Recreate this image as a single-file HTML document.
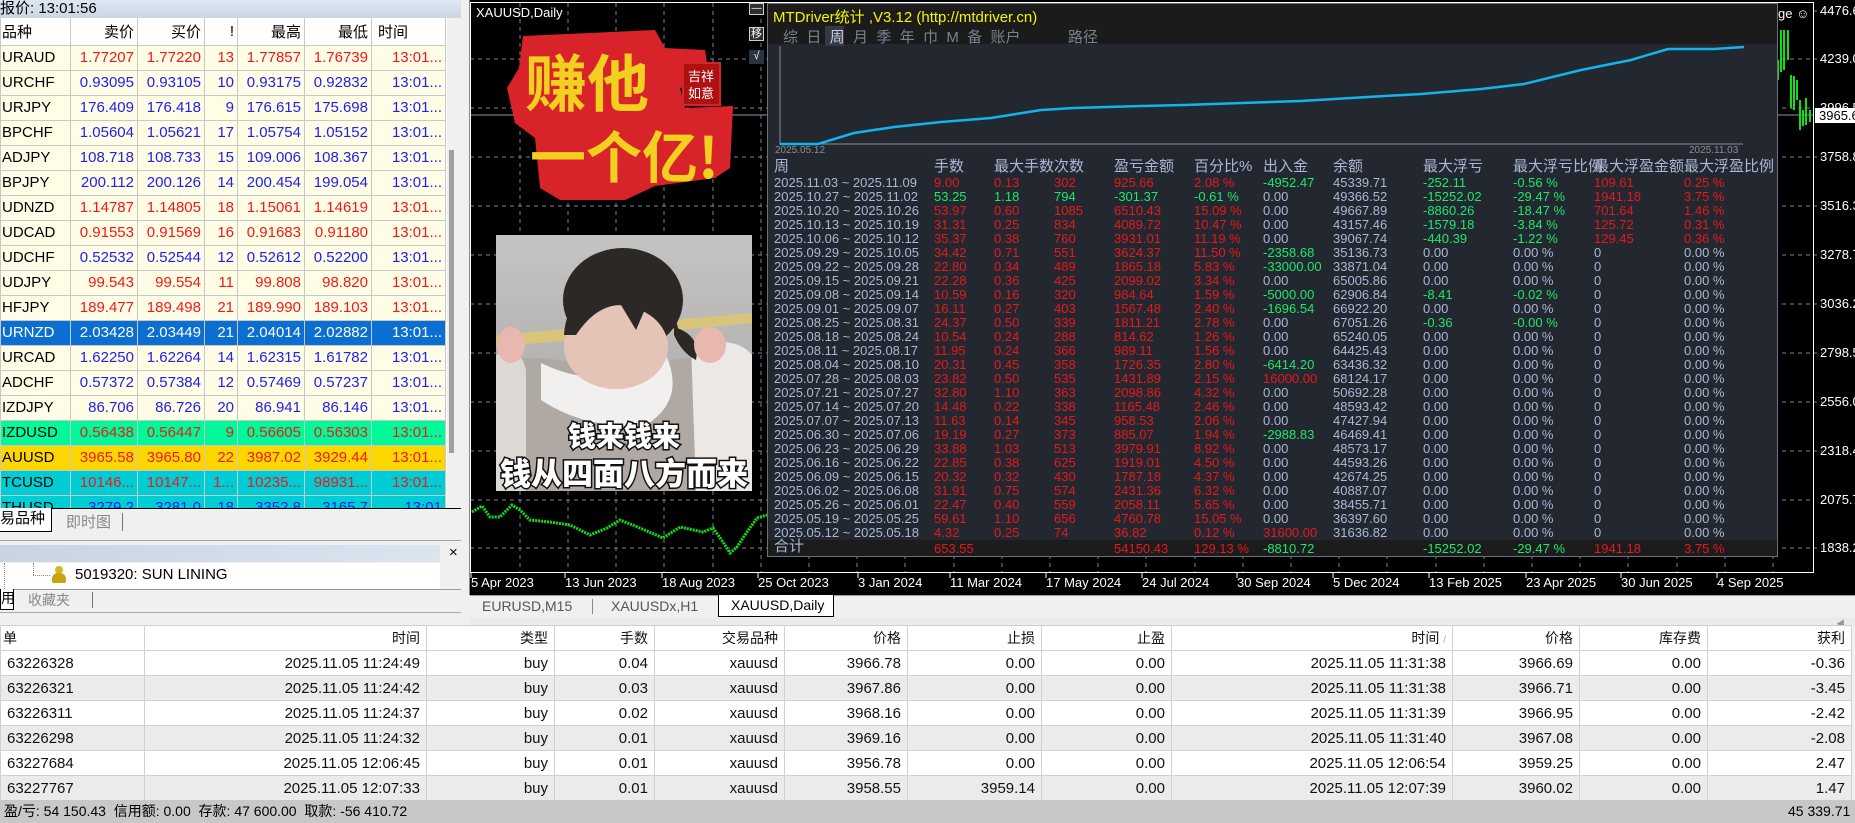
<!DOCTYPE html>
<html><head><meta charset="utf-8">
<style>
*{margin:0;padding:0;box-sizing:border-box}
body{width:1855px;height:823px;overflow:hidden;position:relative;background:#f0f0f0;font-family:"Liberation Sans","Noto Sans CJK SC",sans-serif}
.a{position:absolute}
#lp table{border-collapse:collapse;table-layout:fixed;font-size:15px}
#lp td{height:25px;border:1px solid #c8c8c8;text-align:right;padding-right:3px;white-space:nowrap;overflow:hidden;background:#fffde6}
#lp td:first-child{text-align:left;padding-left:1px;color:#000}
#lp tr.h td{height:27px;background:#fff;color:#000;border-top:none}
.B td{color:#2020f0}.R td{color:#f01818}
tr.sel td{background:#0a6fd0!important;color:#fff!important}
tr.mi td{background:#00fa9a!important}tr.go td{background:#ffd700!important}tr.te td{background:#00ccd4!important}
#sp{left:767px;top:3px;width:1011px;height:554px;background:#232830;border:1px solid #6a7080;color:#a9b8d6;overflow:hidden}
.row{position:absolute;left:0;height:14px;line-height:14px;font-size:13px;white-space:nowrap;width:1010px}
.row span{position:absolute}
.r{color:#e8181c}.g{color:#1de86a}
.c0{left:6px}.c1{left:166px}.c2{left:226px}.c3{left:286px}.c4{left:346px}.c5{left:426px}.c6{left:495px}.c7{left:565px}.c8{left:655px}.c9{left:745px}.c10{left:826px}.c11{left:916px}
#bt{border-collapse:collapse;table-layout:fixed;font-size:15px;position:absolute;left:0;top:625px;width:1851px}
#bt td{height:25px;border:1px solid #d0d0d0;text-align:right;padding-right:6px;white-space:nowrap;color:#111}
#bt tr.h td{background:#fff;font-size:14px}
#bt tr:nth-child(odd):not(.h) td{background:#ebebeb}
#bt tr:nth-child(even) td{background:#fff}
.pl{position:absolute;left:1820px;color:#fff;font-size:13px;line-height:14px}
.dl{position:absolute;top:575px;color:#fff;font-size:13px}
</style></head><body>

<!-- LEFT PANEL -->
<div class="a" style="left:0;top:0;width:461px;height:18px;background:linear-gradient(#dfe7f1,#c9d6e4);font-size:15px;line-height:18px;padding-left:0">报价: 13:01:56</div>
<div id="lp" class="a" style="left:0;top:18px;width:447px;height:490px;overflow:hidden;background:#fff">
<table style="width:445px">
<colgroup><col style="width:70px"><col style="width:67px"><col style="width:67px"><col style="width:33px"><col style="width:67px"><col style="width:67px"><col style="width:74px"></colgroup>
<tr class="h"><td>品种</td><td>卖价</td><td>买价</td><td>!</td><td>最高</td><td>最低</td><td style="text-align:left;padding-left:6px">时间</td></tr>
<tr class="R"><td>URAUD</td><td>1.77207</td><td>1.77220</td><td>13</td><td>1.77857</td><td>1.76739</td><td>13:01...</td></tr>
<tr class="B"><td>URCHF</td><td>0.93095</td><td>0.93105</td><td>10</td><td>0.93175</td><td>0.92832</td><td>13:01...</td></tr>
<tr class="B"><td>URJPY</td><td>176.409</td><td>176.418</td><td>9</td><td>176.615</td><td>175.698</td><td>13:01...</td></tr>
<tr class="B"><td>BPCHF</td><td>1.05604</td><td>1.05621</td><td>17</td><td>1.05754</td><td>1.05152</td><td>13:01...</td></tr>
<tr class="B"><td>ADJPY</td><td>108.718</td><td>108.733</td><td>15</td><td>109.006</td><td>108.367</td><td>13:01...</td></tr>
<tr class="B"><td>BPJPY</td><td>200.112</td><td>200.126</td><td>14</td><td>200.454</td><td>199.054</td><td>13:01...</td></tr>
<tr class="R"><td>UDNZD</td><td>1.14787</td><td>1.14805</td><td>18</td><td>1.15061</td><td>1.14619</td><td>13:01...</td></tr>
<tr class="R"><td>UDCAD</td><td>0.91553</td><td>0.91569</td><td>16</td><td>0.91683</td><td>0.91180</td><td>13:01...</td></tr>
<tr class="B"><td>UDCHF</td><td>0.52532</td><td>0.52544</td><td>12</td><td>0.52612</td><td>0.52200</td><td>13:01...</td></tr>
<tr class="R"><td>UDJPY</td><td>99.543</td><td>99.554</td><td>11</td><td>99.808</td><td>98.820</td><td>13:01...</td></tr>
<tr class="R"><td>HFJPY</td><td>189.477</td><td>189.498</td><td>21</td><td>189.990</td><td>189.103</td><td>13:01...</td></tr>
<tr class="sel"><td>URNZD</td><td>2.03428</td><td>2.03449</td><td>21</td><td>2.04014</td><td>2.02882</td><td>13:01...</td></tr>
<tr class="B"><td>URCAD</td><td>1.62250</td><td>1.62264</td><td>14</td><td>1.62315</td><td>1.61782</td><td>13:01...</td></tr>
<tr class="B"><td>ADCHF</td><td>0.57372</td><td>0.57384</td><td>12</td><td>0.57469</td><td>0.57237</td><td>13:01...</td></tr>
<tr class="B"><td>IZDJPY</td><td>86.706</td><td>86.726</td><td>20</td><td>86.941</td><td>86.146</td><td>13:01...</td></tr>
<tr class="R mi"><td>IZDUSD</td><td>0.56438</td><td>0.56447</td><td>9</td><td>0.56605</td><td>0.56303</td><td>13:01...</td></tr>
<tr class="R go"><td>AUUSD</td><td>3965.58</td><td>3965.80</td><td>22</td><td>3987.02</td><td>3929.44</td><td>13:01...</td></tr>
<tr class="R te"><td>TCUSD</td><td>10146...</td><td>10147...</td><td>1...</td><td>10235...</td><td>98931...</td><td>13:01...</td></tr>
<tr class="B te"><td>THUSD</td><td>3279.2</td><td>3281.0</td><td>18</td><td>3352.8</td><td>3165.7</td><td>13:01</td></tr>
</table></div>
<div class="a" style="left:447px;top:18px;width:14px;height:490px;background:#f0f0f0"></div>
<div class="a" style="left:449px;top:150px;width:5px;height:303px;background:#a0a0a0"></div>
<div class="a" style="left:0;top:508px;width:461px;height:1px;background:#000"></div>
<div class="a" style="left:0;top:508px;width:52px;height:24px;background:#fff;border:1px solid #000;border-left:none;border-top:none;font-size:15px;line-height:22px">易品种</div>
<div class="a" style="left:66px;top:511px;font-size:15px;color:#888">即时图</div>
<div class="a" style="left:122px;top:513px;width:1px;height:18px;background:#777"></div>
<div class="a" style="left:0;top:540px;width:461px;height:1px;background:#a0a0a0"></div>
<div class="a" style="left:0;top:545px;width:440px;height:17px;background:linear-gradient(90deg,#c8d4e2,#dbe5f0)"></div>
<div class="a" style="left:449px;top:544px;font-size:15px">×</div>
<div class="a" style="left:0;top:563px;width:440px;height:26px;background:#fff"></div>
<div class="a" style="left:4px;top:563px;width:1px;height:26px;border-left:1px dotted #888"></div>
<div class="a" style="left:33px;top:563px;width:1px;height:12px;border-left:1px dotted #888"></div>
<div class="a" style="left:33px;top:575px;width:17px;height:1px;border-top:1px dotted #888"></div>
<div class="a" style="left:52px;top:566px;width:13px;height:17px"><div class="a" style="left:3px;top:0;width:8px;height:8px;border-radius:50%;background:#d8b818"></div><div class="a" style="left:0;top:7px;width:14px;height:10px;border-radius:6px 6px 2px 2px;background:#c9a412"></div></div>
<div class="a" style="left:75px;top:566px;font-size:15px">5019320: SUN LINING</div>
<div class="a" style="left:0;top:589px;width:461px;height:1px;background:#999"></div>
<div class="a" style="left:0;top:589px;width:14px;height:21px;background:#fff;border:1px solid #000;border-top:none;font-size:14px;line-height:18px">用</div>
<div class="a" style="left:28px;top:590px;font-size:14px;color:#888">收藏夹</div>
<div class="a" style="left:92px;top:592px;width:1px;height:16px;background:#777"></div>
<div class="a" style="left:0;top:612px;width:461px;height:1px;background:#aaa"></div>
<div class="a" style="left:461px;top:0;width:9px;height:595px;background:#f0f0f0;border-right:1px solid #888"></div>

<!-- CHART -->
<div class="a" style="left:470px;top:0;width:1385px;height:595px;background:#000"></div>
<svg class="a" style="left:0;top:0" width="1855" height="595">
<g stroke="#7a7f88" stroke-width="1" stroke-dasharray="4 4">
<path d="M470 59H1813M470 108H1813M470 157H1813M470 206H1813M470 255H1813M470 304H1813M470 353H1813M470 402H1813M470 451H1813M470 500H1813M470 548H1813"/>
<path d="M520 3V572M568 3V572M616 3V572M664 3V572M713 3V572M761 3V572M809 3V572M857 3V572M905 3V572M954 3V572M1002 3V572M1050 3V572M1098 3V572M1146 3V572M1195 3V572M1243 3V572M1291 3V572M1339 3V572M1387 3V572M1436 3V572M1484 3V572M1532 3V572M1580 3V572M1628 3V572M1677 3V572M1725 3V572M1773 3V572"/>
<path d="M1813 11H1822M1813 59H1822M1813 157H1822M1813 206H1822M1813 255H1822M1813 304H1822M1813 353H1822M1813 402H1822M1813 451H1822M1813 548H1822"/>
</g>
<path d="M470 115H1813" stroke="#8a96a8" stroke-width="1"/>
<rect x="470.5" y="2.5" width="1343" height="570" fill="none" stroke="#fff"/>
<g stroke="#fff"><path d="M471 572v6M565 572v6M662 572v6M758 572v6M858 572v6M950 572v6M1046 572v6M1142 572v6M1237 572v6M1333 572v6M1429 572v6M1526 572v6M1621 572v6M1717 572v6"/></g>
<polyline fill="none" stroke="#10e010" stroke-width="3" stroke-dasharray="2 1" points="472,512 482,506 490,517 500,517 512,505 520,510 530,520 550,522 570,525 590,535 607,528 620,520 640,528 663,538 680,527 703,532 713,528 723,542 730,553 737,547 747,532 757,518 767,515"/>
<g stroke="#10e010" stroke-width="2"><path d="M1778 60V80M1781 30V72M1784 30V70M1788 30V60M1791 75V108M1794 76V110M1797 80V100M1800 100V130M1803 110V126M1806 98V125M1810 110V122"/></g>
</svg>
<div class="a" style="left:476px;top:5px;color:#fff;font-size:13px">XAUUSD,Daily</div>
<div class="a" style="left:1778px;top:6px;color:#fff;font-size:13px">ge ☺</div>
<div class="pl" style="top:4px">4476.6</div><div class="pl" style="top:52px">4239.0</div><div class="pl" style="top:101px">3996.5</div>
<div class="a" style="left:1815px;top:108px;width:40px;height:15px;background:#fff;color:#000;font-size:13px;line-height:15px;padding-left:4px">3965.6</div>
<div class="pl" style="top:150px">3758.8</div><div class="pl" style="top:199px">3516.3</div><div class="pl" style="top:248px">3278.7</div><div class="pl" style="top:297px">3036.2</div><div class="pl" style="top:346px">2798.5</div><div class="pl" style="top:395px">2556.0</div><div class="pl" style="top:444px">2318.4</div><div class="pl" style="top:493px">2075.7</div><div class="pl" style="top:541px">1838.2</div>
<div class="dl" style="left:471px">5 Apr 2023</div><div class="dl" style="left:565px">13 Jun 2023</div><div class="dl" style="left:662px">18 Aug 2023</div><div class="dl" style="left:758px">25 Oct 2023</div><div class="dl" style="left:858px">3 Jan 2024</div><div class="dl" style="left:950px">11 Mar 2024</div><div class="dl" style="left:1046px">17 May 2024</div><div class="dl" style="left:1142px">24 Jul 2024</div><div class="dl" style="left:1237px">30 Sep 2024</div><div class="dl" style="left:1333px">5 Dec 2024</div><div class="dl" style="left:1429px">13 Feb 2025</div><div class="dl" style="left:1526px">23 Apr 2025</div><div class="dl" style="left:1621px">30 Jun 2025</div><div class="dl" style="left:1717px">4 Sep 2025</div>

<!-- buttons -->
<div class="a" style="left:749px;top:3px;width:15px;height:12px;background:#303030;border:1px solid #ccc;color:#fff;font-size:10px;line-height:10px;text-align:center">—</div>
<div class="a" style="left:749px;top:27px;width:15px;height:14px;background:#303030;border:1px solid #ccc;color:#fff;font-size:11px;line-height:12px;text-align:center">移</div>
<div class="a" style="left:749px;top:50px;width:15px;height:14px;background:#2a3440;color:#fff;font-size:11px;line-height:13px;text-align:center">√</div>

<!-- sticker -->
<svg class="a" style="left:505px;top:28px" width="232" height="180">
<path d="M18 8 L150 2 L160 20 L200 22 L205 55 L175 60 L180 80 L228 78 L225 140 L210 150 L150 158 L120 172 L55 172 L35 160 L30 110 L10 95 L2 60 L14 40 Z" fill="#d8232a"/>
<rect x="178" y="35" width="37" height="42" fill="#b01010" stroke="#d02828" stroke-width="2"/>
<text x="183" y="53" fill="#fff" font-size="13" font-family="Noto Sans CJK SC">吉祥</text>
<text x="183" y="70" fill="#fff" font-size="13" font-family="Noto Sans CJK SC">如意</text>
<text x="20" y="78" fill="#f2d020" font-size="62" font-weight="bold" font-family="Noto Sans CJK SC,sans-serif">赚他</text>
<text x="25" y="150" fill="#f2d020" font-size="56" font-weight="bold" font-family="Noto Sans CJK SC,sans-serif">一个亿!</text>
</svg>

<!-- photo -->
<svg class="a" style="left:496px;top:235px" width="256" height="256">
<defs><linearGradient id="bg" x1="0" y1="0" x2="0" y2="1"><stop offset="0" stop-color="#c4c4c4"/><stop offset="1" stop-color="#a8a4a0"/></linearGradient></defs>
<rect width="256" height="256" fill="url(#bg)"/>
<path d="M0 100 L256 78 L256 88 L0 112Z" fill="#d8c47a"/>
<path d="M0 125 Q60 118 100 135 L150 130 Q220 115 256 125 V256 H0Z" fill="#b0a8a2"/>
<path d="M45 128 Q110 160 170 120 Q190 165 150 190 Q90 195 45 165Z" fill="#f2f0ee"/>
<path d="M195 110 Q240 100 256 120 V256 H200Z" fill="#ece8e6"/>
<path d="M0 120 Q25 110 30 135 V256 H0Z" fill="#dcd8d4"/>
<ellipse cx="127" cy="65" rx="60" ry="52" fill="#2c2826"/>
<ellipse cx="120" cy="112" rx="52" ry="42" fill="#e4c4b6"/>
<path d="M68 100 Q70 55 125 48 Q178 52 183 100 Q165 75 150 72 L140 95 L125 70 Q100 70 80 100Z" fill="#2c2826"/>
<path d="M178 92 Q205 100 200 125 Q186 118 178 100Z" fill="#2c2826"/>
<ellipse cx="15" cy="110" rx="14" ry="18" fill="#e8b8b0"/>
<ellipse cx="214" cy="110" rx="16" ry="18" fill="#e8b8b0"/>
<g font-family="Noto Sans CJK SC,sans-serif" font-weight="900" text-anchor="middle" fill="#fff" stroke="#111" stroke-width="3" paint-order="stroke">
<text x="128" y="211" font-size="28">钱来钱来</text>
<text x="128" y="250" font-size="31">钱从四面八方而来</text>
</g>
</svg>

<!-- STATS PANEL -->
<div id="sp" class="a">
<div class="a" style="left:0;top:0;width:1011px;height:40px;background:#1b1b1b"></div>
<div class="a" style="left:5px;top:2px;color:#f5f500;font-size:15px">MTDriver统计 ,V3.12 (http://mtdriver.cn)</div>
<div class="a" style="left:57px;top:22px;width:19px;height:20px;background:#333a46"></div>
<div class="a" style="left:15px;top:22px;color:#7a8290;font-size:15px;word-spacing:0;white-space:pre">综  日  <span style="color:#c8d0dc">周</span>  月  季  年  巾  M  备  账户</div>
<div class="a" style="left:300px;top:22px;color:#7a8290;font-size:15px">路径</div>
<svg class="a" style="left:0;top:40px" width="1010" height="120">
<path d="M12 2V100H975" stroke="#8a8e96" fill="none"/>
<polyline fill="none" stroke="#12b4ee" stroke-width="2.5" points="12,100 50,100 86,89 126,83 173,78 223,74 273,66 306,64 373,62 416,61 533,57 600,53 653,50 713,45 756,40 813,26 863,16 900,5 946,5 976,3"/>
</svg>
<div class="a" style="left:7px;top:141px;font-size:10px;color:#8a8e96">2025.05.12</div>
<div class="a" style="left:921px;top:141px;font-size:10px;color:#8a8e96">2025.11.03</div>
<div class="row" style="top:154px;height:18px;line-height:18px;font-size:15px"><span class="c0">周</span><span class="c1">手数</span><span class="c2">最大手数次数</span><span class="c4">盈亏金额</span><span class="c5">百分比%</span><span class="c6">出入金</span><span class="c7">余额</span><span class="c8">最大浮亏</span><span class="c9">最大浮亏比例</span><span class="c10">最大浮盈金额</span><span class="c11">最大浮盈比例</span></div>
<div class="row" style="top:172px"><span class="c0">2025.11.03 ~ 2025.11.09</span><span class="c1 r">9.00</span><span class="c2 r">0.13</span><span class="c3 r">302</span><span class="c4 r">925.66</span><span class="c5 r">2.08 %</span><span class="c6 g">-4952.47</span><span class="c7">45339.71</span><span class="c8 g">-252.11</span><span class="c9 g">-0.56 %</span><span class="c10 r">109.61</span><span class="c11 r">0.25 %</span></div>
<div class="row" style="top:186px"><span class="c0">2025.10.27 ~ 2025.11.02</span><span class="c1 g">53.25</span><span class="c2 g">1.18</span><span class="c3 g">794</span><span class="c4 g">-301.37</span><span class="c5 g">-0.61 %</span><span class="c6">0.00</span><span class="c7">49366.52</span><span class="c8 g">-15252.02</span><span class="c9 g">-29.47 %</span><span class="c10 r">1941.18</span><span class="c11 r">3.75 %</span></div>
<div class="row" style="top:200px"><span class="c0">2025.10.20 ~ 2025.10.26</span><span class="c1 r">53.97</span><span class="c2 r">0.60</span><span class="c3 r">1085</span><span class="c4 r">6510.43</span><span class="c5 r">15.09 %</span><span class="c6">0.00</span><span class="c7">49667.89</span><span class="c8 g">-8860.26</span><span class="c9 g">-18.47 %</span><span class="c10 r">701.64</span><span class="c11 r">1.46 %</span></div>
<div class="row" style="top:214px"><span class="c0">2025.10.13 ~ 2025.10.19</span><span class="c1 r">31.31</span><span class="c2 r">0.25</span><span class="c3 r">834</span><span class="c4 r">4089.72</span><span class="c5 r">10.47 %</span><span class="c6">0.00</span><span class="c7">43157.46</span><span class="c8 g">-1579.18</span><span class="c9 g">-3.84 %</span><span class="c10 r">125.72</span><span class="c11 r">0.31 %</span></div>
<div class="row" style="top:228px"><span class="c0">2025.10.06 ~ 2025.10.12</span><span class="c1 r">35.37</span><span class="c2 r">0.38</span><span class="c3 r">760</span><span class="c4 r">3931.01</span><span class="c5 r">11.19 %</span><span class="c6">0.00</span><span class="c7">39067.74</span><span class="c8 g">-440.39</span><span class="c9 g">-1.22 %</span><span class="c10 r">129.45</span><span class="c11 r">0.36 %</span></div>
<div class="row" style="top:242px"><span class="c0">2025.09.29 ~ 2025.10.05</span><span class="c1 r">34.42</span><span class="c2 r">0.71</span><span class="c3 r">551</span><span class="c4 r">3624.37</span><span class="c5 r">11.50 %</span><span class="c6 g">-2358.68</span><span class="c7">35136.73</span><span class="c8">0.00</span><span class="c9">0.00 %</span><span class="c10">0</span><span class="c11">0.00 %</span></div>
<div class="row" style="top:256px"><span class="c0">2025.09.22 ~ 2025.09.28</span><span class="c1 r">22.80</span><span class="c2 r">0.34</span><span class="c3 r">489</span><span class="c4 r">1865.18</span><span class="c5 r">5.83 %</span><span class="c6 g">-33000.00</span><span class="c7">33871.04</span><span class="c8">0.00</span><span class="c9">0.00 %</span><span class="c10">0</span><span class="c11">0.00 %</span></div>
<div class="row" style="top:270px"><span class="c0">2025.09.15 ~ 2025.09.21</span><span class="c1 r">22.28</span><span class="c2 r">0.36</span><span class="c3 r">425</span><span class="c4 r">2099.02</span><span class="c5 r">3.34 %</span><span class="c6">0.00</span><span class="c7">65005.86</span><span class="c8">0.00</span><span class="c9">0.00 %</span><span class="c10">0</span><span class="c11">0.00 %</span></div>
<div class="row" style="top:284px"><span class="c0">2025.09.08 ~ 2025.09.14</span><span class="c1 r">10.59</span><span class="c2 r">0.16</span><span class="c3 r">320</span><span class="c4 r">984.64</span><span class="c5 r">1.59 %</span><span class="c6 g">-5000.00</span><span class="c7">62906.84</span><span class="c8 g">-8.41</span><span class="c9 g">-0.02 %</span><span class="c10">0</span><span class="c11">0.00 %</span></div>
<div class="row" style="top:298px"><span class="c0">2025.09.01 ~ 2025.09.07</span><span class="c1 r">16.11</span><span class="c2 r">0.27</span><span class="c3 r">403</span><span class="c4 r">1567.48</span><span class="c5 r">2.40 %</span><span class="c6 g">-1696.54</span><span class="c7">66922.20</span><span class="c8">0.00</span><span class="c9">0.00 %</span><span class="c10">0</span><span class="c11">0.00 %</span></div>
<div class="row" style="top:312px"><span class="c0">2025.08.25 ~ 2025.08.31</span><span class="c1 r">24.37</span><span class="c2 r">0.50</span><span class="c3 r">339</span><span class="c4 r">1811.21</span><span class="c5 r">2.78 %</span><span class="c6">0.00</span><span class="c7">67051.26</span><span class="c8 g">-0.36</span><span class="c9 g">-0.00 %</span><span class="c10">0</span><span class="c11">0.00 %</span></div>
<div class="row" style="top:326px"><span class="c0">2025.08.18 ~ 2025.08.24</span><span class="c1 r">10.54</span><span class="c2 r">0.24</span><span class="c3 r">288</span><span class="c4 r">814.62</span><span class="c5 r">1.26 %</span><span class="c6">0.00</span><span class="c7">65240.05</span><span class="c8">0.00</span><span class="c9">0.00 %</span><span class="c10">0</span><span class="c11">0.00 %</span></div>
<div class="row" style="top:340px"><span class="c0">2025.08.11 ~ 2025.08.17</span><span class="c1 r">11.95</span><span class="c2 r">0.24</span><span class="c3 r">366</span><span class="c4 r">989.11</span><span class="c5 r">1.56 %</span><span class="c6">0.00</span><span class="c7">64425.43</span><span class="c8">0.00</span><span class="c9">0.00 %</span><span class="c10">0</span><span class="c11">0.00 %</span></div>
<div class="row" style="top:354px"><span class="c0">2025.08.04 ~ 2025.08.10</span><span class="c1 r">20.31</span><span class="c2 r">0.45</span><span class="c3 r">358</span><span class="c4 r">1726.35</span><span class="c5 r">2.80 %</span><span class="c6 g">-6414.20</span><span class="c7">63436.32</span><span class="c8">0.00</span><span class="c9">0.00 %</span><span class="c10">0</span><span class="c11">0.00 %</span></div>
<div class="row" style="top:368px"><span class="c0">2025.07.28 ~ 2025.08.03</span><span class="c1 r">23.82</span><span class="c2 r">0.50</span><span class="c3 r">535</span><span class="c4 r">1431.89</span><span class="c5 r">2.15 %</span><span class="c6 r">16000.00</span><span class="c7">68124.17</span><span class="c8">0.00</span><span class="c9">0.00 %</span><span class="c10">0</span><span class="c11">0.00 %</span></div>
<div class="row" style="top:382px"><span class="c0">2025.07.21 ~ 2025.07.27</span><span class="c1 r">32.80</span><span class="c2 r">1.10</span><span class="c3 r">363</span><span class="c4 r">2098.86</span><span class="c5 r">4.32 %</span><span class="c6">0.00</span><span class="c7">50692.28</span><span class="c8">0.00</span><span class="c9">0.00 %</span><span class="c10">0</span><span class="c11">0.00 %</span></div>
<div class="row" style="top:396px"><span class="c0">2025.07.14 ~ 2025.07.20</span><span class="c1 r">14.48</span><span class="c2 r">0.22</span><span class="c3 r">338</span><span class="c4 r">1165.48</span><span class="c5 r">2.46 %</span><span class="c6">0.00</span><span class="c7">48593.42</span><span class="c8">0.00</span><span class="c9">0.00 %</span><span class="c10">0</span><span class="c11">0.00 %</span></div>
<div class="row" style="top:410px"><span class="c0">2025.07.07 ~ 2025.07.13</span><span class="c1 r">11.63</span><span class="c2 r">0.14</span><span class="c3 r">345</span><span class="c4 r">958.53</span><span class="c5 r">2.06 %</span><span class="c6">0.00</span><span class="c7">47427.94</span><span class="c8">0.00</span><span class="c9">0.00 %</span><span class="c10">0</span><span class="c11">0.00 %</span></div>
<div class="row" style="top:424px"><span class="c0">2025.06.30 ~ 2025.07.06</span><span class="c1 r">19.19</span><span class="c2 r">0.27</span><span class="c3 r">373</span><span class="c4 r">885.07</span><span class="c5 r">1.94 %</span><span class="c6 g">-2988.83</span><span class="c7">46469.41</span><span class="c8">0.00</span><span class="c9">0.00 %</span><span class="c10">0</span><span class="c11">0.00 %</span></div>
<div class="row" style="top:438px"><span class="c0">2025.06.23 ~ 2025.06.29</span><span class="c1 r">33.88</span><span class="c2 r">1.03</span><span class="c3 r">513</span><span class="c4 r">3979.91</span><span class="c5 r">8.92 %</span><span class="c6">0.00</span><span class="c7">48573.17</span><span class="c8">0.00</span><span class="c9">0.00 %</span><span class="c10">0</span><span class="c11">0.00 %</span></div>
<div class="row" style="top:452px"><span class="c0">2025.06.16 ~ 2025.06.22</span><span class="c1 r">22.85</span><span class="c2 r">0.38</span><span class="c3 r">625</span><span class="c4 r">1919.01</span><span class="c5 r">4.50 %</span><span class="c6">0.00</span><span class="c7">44593.26</span><span class="c8">0.00</span><span class="c9">0.00 %</span><span class="c10">0</span><span class="c11">0.00 %</span></div>
<div class="row" style="top:466px"><span class="c0">2025.06.09 ~ 2025.06.15</span><span class="c1 r">20.32</span><span class="c2 r">0.32</span><span class="c3 r">430</span><span class="c4 r">1787.18</span><span class="c5 r">4.37 %</span><span class="c6">0.00</span><span class="c7">42674.25</span><span class="c8">0.00</span><span class="c9">0.00 %</span><span class="c10">0</span><span class="c11">0.00 %</span></div>
<div class="row" style="top:480px"><span class="c0">2025.06.02 ~ 2025.06.08</span><span class="c1 r">31.91</span><span class="c2 r">0.75</span><span class="c3 r">574</span><span class="c4 r">2431.36</span><span class="c5 r">6.32 %</span><span class="c6">0.00</span><span class="c7">40887.07</span><span class="c8">0.00</span><span class="c9">0.00 %</span><span class="c10">0</span><span class="c11">0.00 %</span></div>
<div class="row" style="top:494px"><span class="c0">2025.05.26 ~ 2025.06.01</span><span class="c1 r">22.47</span><span class="c2 r">0.40</span><span class="c3 r">559</span><span class="c4 r">2058.11</span><span class="c5 r">5.65 %</span><span class="c6">0.00</span><span class="c7">38455.71</span><span class="c8">0.00</span><span class="c9">0.00 %</span><span class="c10">0</span><span class="c11">0.00 %</span></div>
<div class="row" style="top:508px"><span class="c0">2025.05.19 ~ 2025.05.25</span><span class="c1 r">59.61</span><span class="c2 r">1.10</span><span class="c3 r">656</span><span class="c4 r">4760.78</span><span class="c5 r">15.05 %</span><span class="c6">0.00</span><span class="c7">36397.60</span><span class="c8">0.00</span><span class="c9">0.00 %</span><span class="c10">0</span><span class="c11">0.00 %</span></div>
<div class="row" style="top:522px"><span class="c0">2025.05.12 ~ 2025.05.18</span><span class="c1 r">4.32</span><span class="c2 r">0.25</span><span class="c3 r">74</span><span class="c4 r">36.82</span><span class="c5 r">0.12 %</span><span class="c6 r">31600.00</span><span class="c7">31636.82</span><span class="c8">0.00</span><span class="c9">0.00 %</span><span class="c10">0</span><span class="c11">0.00 %</span></div>
<div class="a" style="left:0;top:536px;width:1011px;height:18px;background:#1c1c1c"></div>
<div class="row" style="top:538px;font-size:13px"><span class="c0" style="font-size:15px;top:-2px">合计</span><span class="c1 r">653.55</span><span class="c4 r">54150.43</span><span class="c5 r">129.13 %</span><span class="c6 g">-8810.72</span><span class="c8 g">-15252.02</span><span class="c9 g">-29.47 %</span><span class="c10 r">1941.18</span><span class="c11 r">3.75 %</span></div>
</div>

<!-- chart tabs -->
<div class="a" style="left:470px;top:595px;width:1385px;height:22px;background:#f0f0f0;border-top:1px solid #999"></div>
<div class="a" style="left:482px;top:598px;font-size:14px;color:#555">EURUSD,M15</div>
<div class="a" style="left:592px;top:599px;width:1px;height:15px;background:#888"></div>
<div class="a" style="left:611px;top:598px;font-size:14px;color:#555">XAUUSDx,H1</div>
<div class="a" style="left:718px;top:595px;width:116px;height:22px;background:#fff;border:1px solid #000;border-top:none;font-size:14px;line-height:20px;padding-left:12px">XAUUSD,Daily</div>
<div class="a" style="left:470px;top:617px;width:1385px;height:8px;background:#ebebeb"></div>
<div class="a" style="left:1836px;top:617px;font-size:9px;color:#999">◀</div>

<!-- bottom table -->
<table id="bt">
<colgroup><col style="width:144px"><col style="width:282px"><col style="width:128px"><col style="width:100px"><col style="width:130px"><col style="width:123px"><col style="width:134px"><col style="width:130px"><col style="width:281px"><col style="width:127px"><col style="width:128px"><col style="width:144px"></colgroup>
<tr class="h"><td style="text-align:left;padding-left:2px">单</td><td>时间</td><td>类型</td><td>手数</td><td>交易品种</td><td>价格</td><td>止损</td><td>止盈</td><td>时间 <span style="color:#aaa;font-size:10px">/</span></td><td>价格</td><td>库存费</td><td>获利</td></tr>
<tr><td style="text-align:left;padding-left:6px">63226328</td><td>2025.11.05 11:24:49</td><td>buy</td><td>0.04</td><td>xauusd</td><td>3966.78</td><td>0.00</td><td>0.00</td><td>2025.11.05 11:31:38</td><td>3966.69</td><td>0.00</td><td>-0.36</td></tr>
<tr><td style="text-align:left;padding-left:6px">63226321</td><td>2025.11.05 11:24:42</td><td>buy</td><td>0.03</td><td>xauusd</td><td>3967.86</td><td>0.00</td><td>0.00</td><td>2025.11.05 11:31:38</td><td>3966.71</td><td>0.00</td><td>-3.45</td></tr>
<tr><td style="text-align:left;padding-left:6px">63226311</td><td>2025.11.05 11:24:37</td><td>buy</td><td>0.02</td><td>xauusd</td><td>3968.16</td><td>0.00</td><td>0.00</td><td>2025.11.05 11:31:39</td><td>3966.95</td><td>0.00</td><td>-2.42</td></tr>
<tr><td style="text-align:left;padding-left:6px">63226298</td><td>2025.11.05 11:24:32</td><td>buy</td><td>0.01</td><td>xauusd</td><td>3969.16</td><td>0.00</td><td>0.00</td><td>2025.11.05 11:31:40</td><td>3967.08</td><td>0.00</td><td>-2.08</td></tr>
<tr><td style="text-align:left;padding-left:6px">63227684</td><td>2025.11.05 12:06:45</td><td>buy</td><td>0.01</td><td>xauusd</td><td>3956.78</td><td>0.00</td><td>0.00</td><td>2025.11.05 12:06:54</td><td>3959.25</td><td>0.00</td><td>2.47</td></tr>
<tr><td style="text-align:left;padding-left:6px">63227767</td><td>2025.11.05 12:07:33</td><td>buy</td><td>0.01</td><td>xauusd</td><td>3958.55</td><td>3959.14</td><td>0.00</td><td>2025.11.05 12:07:39</td><td>3960.02</td><td>0.00</td><td>1.47</td></tr>
</table>
<div class="a" style="left:0;top:800px;width:1855px;height:23px;background:#c8c8c8;font-size:14px;line-height:23px;padding-left:4px">盈/亏: 54 150.43&nbsp; 信用额: 0.00&nbsp; 存款: 47 600.00&nbsp; 取款: -56 410.72</div>
<div class="a" style="left:1788px;top:800px;font-size:14px;line-height:23px">45 339.71</div>
</body></html>
